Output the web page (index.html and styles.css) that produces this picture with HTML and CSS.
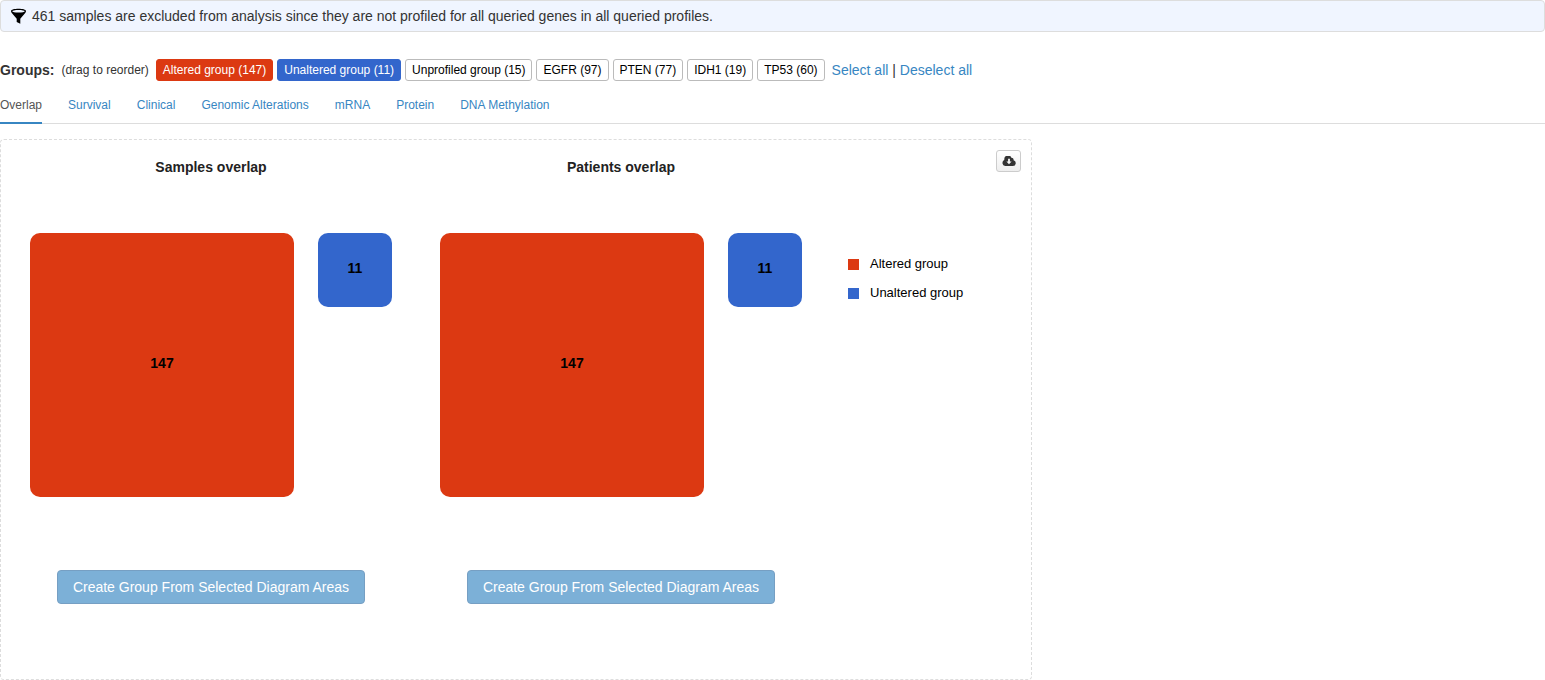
FILE: index.html
```html
<!DOCTYPE html>
<html lang="en">
<head>
<meta charset="utf-8">
<meta name="viewport" content="width=device-width, initial-scale=1">
<title>Group comparison: Overlap</title>
<link rel="stylesheet" href="styles.css">
</head>
<body>
<div class="notice" role="status">
  <svg class="notice-icon" viewBox="0 0 16 16" aria-hidden="true">
    <path fill-rule="evenodd" d="M7.500.800C3.500.800 0 1.600 0 3.200c0 .8.500 1.400 1 2L5.700 10.800V14L9.300 15.800v-5L14 5.200c.5-.6 1-1.200 1-2C15 1.600 11.500.8 7.500.8zM7.500 1.900c3.600 0 6.200.6 6.200 1.300S11.100 4.500 7.500 4.500 1.300 3.900 1.300 3.200 3.900 1.900 7.500 1.900z"/>
  </svg>
  <span>461 samples are excluded from analysis since they are not profiled for all queried genes in all queried profiles.</span>
</div>

<main>
  <div class="groups">
    <strong>Groups:</strong>
    <span class="hint">(drag to reorder)</span>
    <div class="group-list">
      <button type="button" class="group altered">Altered group (147)</button>
      <button type="button" class="group unaltered">Unaltered group (11)</button>
      <button type="button" class="group">Unprofiled group (15)</button>
      <button type="button" class="group">EGFR (97)</button>
      <button type="button" class="group">PTEN (77)</button>
      <button type="button" class="group">IDH1 (19)</button>
      <button type="button" class="group">TP53 (60)</button>
    </div>
    <span><a href="#all">Select all</a> | <a href="#none">Deselect all</a></span>
  </div>

  <nav class="tabs">
    <a class="tab active" href="#overlap" aria-current="page">Overlap</a>
    <a class="tab" href="#survival">Survival</a>
    <a class="tab" href="#clinical">Clinical</a>
    <a class="tab" href="#alterations">Genomic Alterations</a>
    <a class="tab" href="#mrna">mRNA</a>
    <a class="tab" href="#protein">Protein</a>
    <a class="tab" href="#methylation">DNA Methylation</a>
  </nav>

  <section class="panel">
    <div class="plot">
      <h2>Samples overlap</h2>
      <div class="areas">
        <div class="area large altered">147</div>
        <div class="area small unaltered">11</div>
      </div>
      <button type="button" class="create" disabled>Create Group From Selected Diagram Areas</button>
    </div>
    <div class="plot">
      <h2>Patients overlap</h2>
      <div class="areas">
        <div class="area large altered">147</div>
        <div class="area small unaltered">11</div>
      </div>
      <button type="button" class="create" disabled>Create Group From Selected Diagram Areas</button>
    </div>
    <ul class="legend">
      <li><span class="swatch altered"></span>Altered group</li>
      <li><span class="swatch unaltered"></span>Unaltered group</li>
    </ul>
    <button type="button" class="download" aria-label="Download">
      <svg viewBox="0 0 14 10" aria-hidden="true">
        <path fill-rule="evenodd" d="M11.600 4.300A2.300 2.300 0 0 0 9.400 1.700 3.700 3.700 0 0 0 2.300 3.500v.6A3.100 3.100 0 0 0 3.200 10h7.700a2.900 2.900 0 0 0 .7-5.700zM6.100 2.800h1.800v2.700h1.700L7 8.300 4.400 5.500h1.700z"/>
      </svg>
    </button>
  </section>
</main>
</body>
</html>
```

FILE: styles.css
```css
* {
  box-sizing: border-box;
}

body {
  margin: 0;
  background: #fff;
  color: #333;
  font: 14px/20px "Helvetica Neue", Helvetica, Arial, "Liberation Sans", sans-serif;
}

button {
  font: inherit;
  cursor: pointer;
}

a {
  color: #3786c2;
  text-decoration: none;
}

.altered {
  background: #dc3912;
}

.unaltered {
  background: #3366cc;
}

.notice {
  display: flex;
  align-items: center;
  gap: 5px;
  padding: 5px 10px;
  border: 1px solid #ddd;
  border-radius: 4px;
  background: #f0f5ff;
}

.notice-icon {
  width: 16px;
  height: 16px;
  fill: #000;
}

.groups {
  display: flex;
  flex-wrap: wrap;
  align-items: center;
  gap: 7px;
  margin-top: 27px;
}

.hint {
  font-size: 12px;
}

.group-list {
  display: flex;
  flex-wrap: wrap;
  gap: 4px;
}

.group {
  padding: 1px 6px;
  border: 1px solid #bbb;
  border-radius: 3px;
  background: #fff;
  color: #000;
  font-size: 12px;
  line-height: 18px;
}

.group.altered {
  border-color: #dc3912;
  background: #dc3912;
  color: #fff;
}

.group.unaltered {
  border-color: #3366cc;
  background: #3366cc;
  color: #fff;
}

.tabs {
  display: flex;
  flex-wrap: wrap;
  gap: 0 26px;
  margin-top: 14px;
  border-bottom: 1px solid #ddd;
  font-size: 12px;
}

.tab {
  margin-bottom: -1px;
  padding-bottom: 7px;
  border-bottom: 2px solid transparent;
}

.tab.active {
  border-color: #3786c2;
  color: #555;
}

.panel {
  position: relative;
  display: flex;
  width: fit-content;
  margin-top: 15px;
  padding: 17px 68px 75px 29px;
  border: 1px dashed #ddd;
  border-radius: 4px;
}

.plot {
  display: flex;
  flex-direction: column;
  align-items: center;
}

.plot + .plot {
  margin-left: 48px;
}

.plot h2 {
  margin: 0;
  color: #222;
  font-size: 14px;
  line-height: 20px;
}

.areas {
  display: flex;
  align-items: flex-start;
  gap: 24px;
  margin: 56px 0 73px;
}

.area {
  display: grid;
  place-items: center;
  aspect-ratio: 1;
  padding-bottom: 4px;
  border-radius: 10px;
  color: #000;
  font-weight: bold;
}

.large {
  width: 264px;
}

.small {
  width: 74px;
}

.create {
  padding: 6px 15px;
  border: 1px solid #2e6da4;
  border-radius: 4px;
  background: #3786c2;
  color: #fff;
  opacity: .65;
  cursor: not-allowed;
}

.legend {
  display: grid;
  align-content: start;
  gap: 9px;
  margin: 97px 0 0 46px;
  padding: 0;
  color: #000;
  font-size: 13px;
  list-style: none;
}

.legend li {
  display: flex;
  align-items: center;
  gap: 11px;
}

.swatch {
  width: 11px;
  height: 11px;
}

.download {
  position: absolute;
  top: 10px;
  right: 10px;
  display: grid;
  place-items: center;
  width: 25px;
  height: 22px;
  padding: 0;
  border: 1px solid #ccc;
  border-radius: 3px;
  background: linear-gradient(#fff, #eee);
}

.download svg {
  width: 14px;
  height: 10px;
  fill: #333;
}
```
